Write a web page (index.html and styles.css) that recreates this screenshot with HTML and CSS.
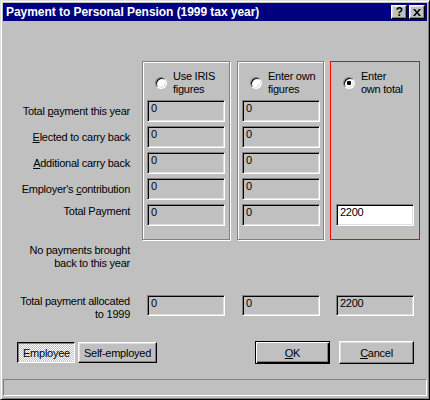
FILE: index.html
```html
<!DOCTYPE html>
<html>
<head>
<meta charset="utf-8">
<title>Payment to Personal Pension</title>
<link rel="stylesheet" href="styles.css">
</head>
<body>
<div class="window">
  <div class="titlebar">
    <span class="title">Payment to Personal Pension (1999 tax year)</span>
    <div class="caption-btns">
      <div class="cap-btn cap-help">?</div>
      <div class="cap-btn cap-close">
        <svg width="8" height="7" viewBox="0 0 8 7"><path d="M0 0h2l2 2.4l2-2.4h2l-3 3.5l3 3.5h-2l-2-2.4l-2 2.4h-2l3-3.5z" fill="#000"/></svg>
      </div>
    </div>
  </div>
  <div class="client">
    <div class="main">
      <div class="labels">
        <div class="label">Total <u>p</u>ayment this year</div>
        <div class="label"><u>E</u>lected to carry back</div>
        <div class="label"><u>A</u>dditional carry back</div>
        <div class="label">Employer's <u>c</u>ontribution</div>
        <div class="label label-raised">Total Payment</div>
      </div>
      <div class="group g1">
        <div class="radio-row"><span class="radio"></span><span class="radio-text">Use IRIS<br>figures</span></div>
        <div class="field">0</div>
        <div class="field">0</div>
        <div class="field">0</div>
        <div class="field">0</div>
        <div class="field">0</div>
      </div>
      <div class="group g2">
        <div class="radio-row"><span class="radio"></span><span class="radio-text">Enter own<br>figures</span></div>
        <div class="field">0</div>
        <div class="field">0</div>
        <div class="field">0</div>
        <div class="field">0</div>
        <div class="field">0</div>
      </div>
      <div class="group g3">
        <div class="radio-row"><span class="radio checked"></span><span class="radio-text">Enter<br>own total</span></div>
        <div class="field field-white">2200</div>
      </div>
    </div>
    <div class="note">No payments brought<br>back to this year</div>
    <div class="alloc">
      <div class="alloc-label">Total payment allocated<br>to 1999</div>
      <div class="cell c1"><div class="field">0</div></div>
      <div class="cell c2"><div class="field">0</div></div>
      <div class="cell c3"><div class="field">2200</div></div>
    </div>
    <div class="buttons">
      <div class="btn btn-employee"><span>Employee</span></div>
      <div class="btn btn-self">Self-employed</div>
      <div class="btn btn-ok"><span><u>O</u>K</span></div>
      <div class="btn btn-cancel"><span><u>C</u>ancel</span></div>
    </div>
  </div>
  <div class="statusbar"></div>
</div>
</body>
</html>
```

FILE: styles.css
```css
body {
  margin: 0;
  background: #c0c0c0;
  font-family: "Liberation Sans", Arial, sans-serif;
  font-size: 11px;
  letter-spacing: -0.25px;
  color: #000;
}

.window {
  box-sizing: border-box;
  width: 430px;
  height: 400px;
  border: 1px solid;
  border-color: #dfdfdf #000 #000 #dfdfdf;
  box-shadow: inset 1px 1px #fff, inset -1px -1px #808080;
  padding: 2px;
  background: #c0c0c0;
  display: flex;
  flex-direction: column;
}

.titlebar {
  height: 18px;
  flex: none;
  background: #000080;
  display: flex;
  align-items: center;
  padding-left: 3px;
}

.title {
  color: #fff;
  font-weight: bold;
  font-size: 12px;
  letter-spacing: -0.05px;
  line-height: 18px;
  white-space: nowrap;
}

.caption-btns {
  margin-left: auto;
  margin-right: 2px;
  display: flex;
  gap: 2px;
}

.cap-btn {
  box-sizing: border-box;
  width: 16px;
  height: 14px;
  background: #c0c0c0;
  border: 1px solid;
  border-color: #fff #000 #000 #fff;
  box-shadow: inset -1px -1px #808080, inset 1px 1px #dfdfdf;
  display: flex;
  align-items: center;
  justify-content: center;
}

.cap-help {
  font-weight: bold;
  font-size: 12px;
  line-height: 12px;
  letter-spacing: 0;
  padding-left: 1px;
}

.client {
  display: flex;
  flex-direction: column;
}

.main {
  display: flex;
  margin-top: 40px;
}

.labels {
  width: 127px;
  margin-right: 12px;
  padding-top: 39px;
  display: flex;
  flex-direction: column;
  gap: 4px;
  text-align: right;
}

.label {
  height: 22px;
  line-height: 22px;
  white-space: nowrap;
}

.label-raised {
  line-height: 14px;
}

.group {
  box-sizing: border-box;
  height: 179px;
  border: 1px solid #808080;
  box-shadow: inset 1px 1px #fff, 1px 1px #fff;
  padding: 8px 0 13px 4px;
  display: flex;
  flex-direction: column;
  gap: 4px;
}

.g1 { width: 88px; margin-right: 7px; }
.g2 { width: 87px; margin-right: 6px; }
.g3 {
  width: 90px;
  border-color: #f00;
  box-shadow: none;
  padding-left: 5px;
}

.radio-row {
  height: 26px;
  display: flex;
  align-items: center;
  padding-left: 8px;
  gap: 6px;
}

.g3 .radio-row { padding-left: 7px; }

.radio-text {
  line-height: 13px;
  white-space: nowrap;
}

.radio {
  position: relative;
  flex: none;
  box-sizing: border-box;
  width: 12px;
  height: 12px;
  border-radius: 50%;
  background: #fff;
  border: 1px solid;
  border-color: #808080 #fff #fff #808080;
  box-shadow: inset 1px 1px #000, inset -1px -1px #dfdfdf;
}

.radio.checked::after {
  content: "";
  position: absolute;
  left: 3px;
  top: 3px;
  width: 4px;
  height: 4px;
  border-radius: 1px;
  background: #000;
}

.field {
  box-sizing: border-box;
  flex: none;
  width: 78px;
  height: 22px;
  border: 1px solid;
  border-color: #808080 #fff #fff #808080;
  box-shadow: inset 1px 1px #000, inset -1px -1px #dfdfdf;
  padding: 1px 3px 0;
  line-height: 13px;
  background: #c0c0c0;
  white-space: nowrap;
}

.field-white {
  background: #fff;
  margin-top: auto;
}

.note {
  width: 127px;
  margin-top: 4px;
  text-align: right;
  line-height: 13px;
  white-space: nowrap;
}

.alloc {
  display: flex;
  margin-top: 25px;
}

.alloc-label {
  width: 127px;
  margin-right: 12px;
  text-align: right;
  line-height: 13px;
  white-space: nowrap;
}

.cell {
  box-sizing: border-box;
  padding-left: 5px;
}

.c1 { width: 89px; margin-right: 6px; }
.c2 { width: 88px; margin-right: 5px; }
.c3 { width: 90px; padding-left: 6px; }

.alloc .field { height: 21px; }

.buttons {
  display: flex;
  align-items: center;
  height: 23px;
  margin-top: 20px;
  padding: 0 13px 0 14px;
}

.btn {
  box-sizing: border-box;
  height: 21px;
  background: #c0c0c0;
  border: 1px solid;
  border-color: #fff #000 #000 #fff;
  box-shadow: inset -1px -1px #808080, inset 1px 1px #dfdfdf;
  display: flex;
  align-items: center;
  justify-content: center;
  white-space: nowrap;
}

.btn-employee {
  width: 58px;
  border-color: #000 #fff #fff #000;
  box-shadow: inset 1px 1px #808080, inset -1px -1px #dfdfdf;
  background: repeating-conic-gradient(#fff 0 25%, #c0c0c0 0 50%) 0 0 / 2px 2px;
  padding-top: 1px;
  padding-left: 1px;
}

.btn-self {
  width: 79px;
  margin-left: 3px;
}

.btn-ok {
  width: 75px;
  height: 23px;
  margin-left: auto;
  border-color: #000;
  box-shadow: inset 1px 1px #fff, inset -1px -1px #000, inset -2px -2px #808080;
}

.btn-cancel {
  width: 75px;
  height: 23px;
  margin-left: 9px;
}

.statusbar {
  box-sizing: border-box;
  flex: none;
  margin-top: auto;
  margin-bottom: 1px;
  height: 17px;
  border: 1px solid;
  border-color: #808080 #fff #fff #808080;
}
```
